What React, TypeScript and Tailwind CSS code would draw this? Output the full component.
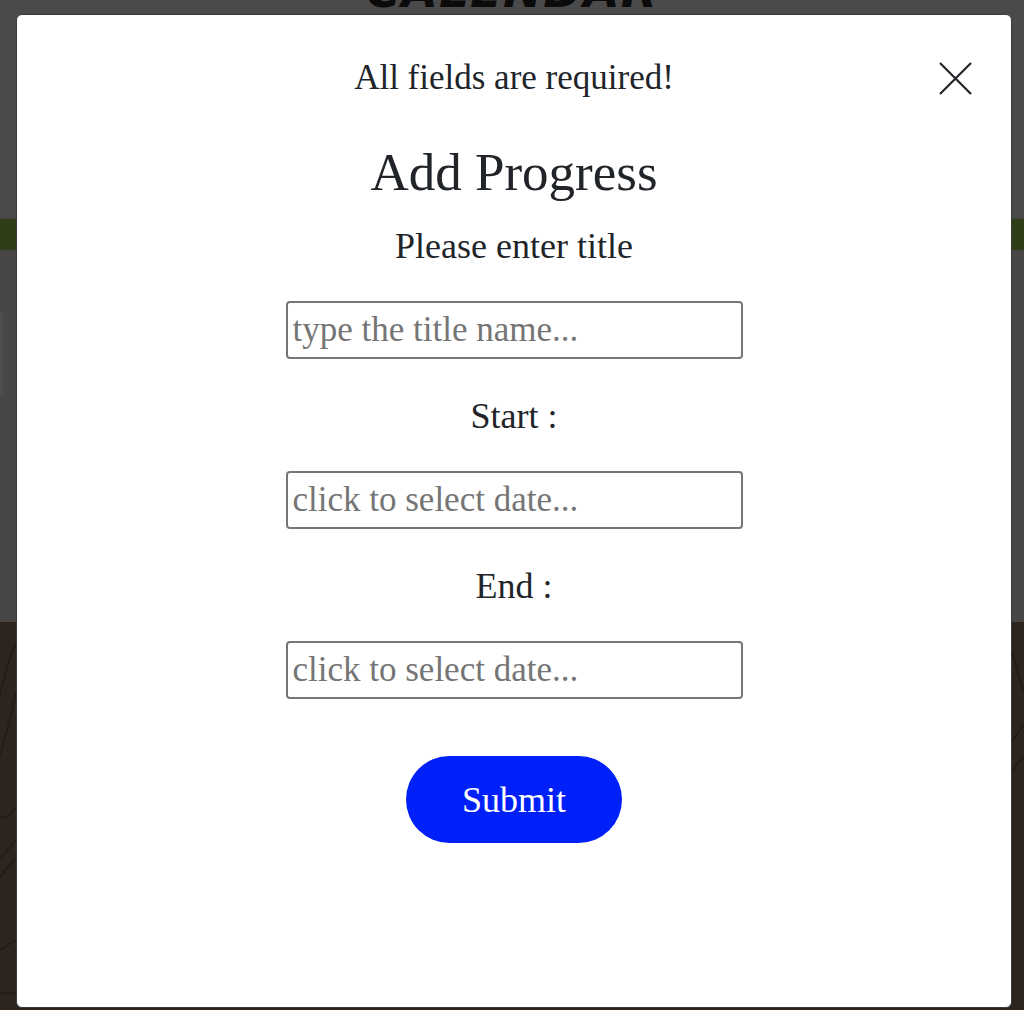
import React, { useState } from 'react';

const serif = { fontFamily: '"Liberation Serif", "DejaVu Serif", serif' };

type Field = {
  label: string;
  placeholder: string;
};

const fields: Field[] = [
  { label: 'Please enter title', placeholder: 'type the title name...' },
  { label: 'Start :', placeholder: 'click to select date...' },
  { label: 'End :', placeholder: 'click to select date...' },
];

const Contours: React.FC = () => (
  <svg className="block h-full w-full" viewBox="0 0 1024 388" preserveAspectRatio="none" fill="none">
    <g stroke="#221a15" strokeWidth="1.5">
      <path d="M16 20 C 8 40, 2 60, -4 90" />
      <path d="M16 70 C 10 100, 4 120, -2 140" />
      <path d="M-4 190 C 4 200, 10 195, 16 185" />
      <path d="M-4 240 C 4 232, 10 226, 16 218" />
      <path d="M-4 260 C 4 250, 10 242, 16 236" />
      <path d="M-4 330 C 4 326, 10 322, 16 318" />
      <path d="M-4 370 C 6 372, 12 372, 16 370" />
      <path d="M1012 30 C 1018 50, 1022 70, 1030 80" />
      <path d="M1012 120 C 1018 110, 1024 100, 1030 96" />
      <path d="M1012 150 C 1018 140, 1024 134, 1030 130" />
    </g>
  </svg>
);

export default function App() {
  const [values, setValues] = useState<string[]>(['', '', '']);

  return (
    <div className="relative h-[1010px] w-[1024px] overflow-hidden bg-[#474747]" style={serif}>
      {/* page underneath the backdrop */}
      <div className="flex h-full flex-col">
        <div className="relative h-[219px] bg-[#4a4a4a]">
          <div
            className="-mt-[33px] text-center text-[47px] font-black italic leading-none tracking-[1px] text-[#0b0b0c]"
            style={{ fontFamily: '"DejaVu Sans", sans-serif' }}
          >
            CALENDAR
          </div>
          <div className="absolute bottom-0 left-0 right-0 h-px bg-[#444]" />
        </div>
        <div className="h-[31px] bg-[#2f3e17]" />
        <div className="flex h-[372px] items-start pt-[62px]">
          <div className="h-[84px] w-[3px] rounded-r-md bg-[#4e4e4e]" />
        </div>
        <div className="flex-1 bg-[#2d241e]">
          <Contours />
        </div>
      </div>

      {/* modal */}
      <div className="absolute left-[16px] top-[14px] flex h-[994px] w-[996px] flex-col items-center rounded-[6px] border border-[#3a3a3a] bg-white text-[#212529]">
        <div className="grid w-full grid-cols-[1fr_auto_1fr] items-center pt-[37px]">
          <div />
          <p className="text-[35px] leading-[52px]">All fields are required!</p>
          <div className="flex justify-end pr-[38px]">
            <button type="button" aria-label="Close" className="flex h-[35px] w-[35px] items-center justify-center">
              <svg width="33" height="33" viewBox="0 0 33 33" fill="none">
                <path d="M1 1 L32 32 M32 1 L1 32" stroke="#212529" strokeWidth="2.2" />
              </svg>
            </button>
          </div>
        </div>

        <h2 className="mt-[38px] text-[53px] leading-[60px]">Add Progress</h2>

        {fields.map((f, i) => (
          <div key={i} className={`flex flex-col items-center ${i === 0 ? 'mt-[18px]' : 'mt-[31px]'}`}>
            <label className="text-[36px] leading-[52px]">{f.label}</label>
            <input
              value={values[i]}
              onChange={(e) => setValues(values.map((v, j) => (j === i ? e.target.value : v)))}
              placeholder={f.placeholder}
              className="mt-[29px] h-[58px] w-[457px] rounded-[4px] border-2 border-[#767676] px-[5px] text-[35px] text-[#212529] outline-none placeholder:text-[#757575]"
              style={serif}
            />
          </div>
        ))}

        <button
          type="button"
          className="mt-[57px] h-[87px] w-[216px] rounded-full bg-[#0020fa] text-[36px] text-white"
          style={serif}
        >
          Submit
        </button>
      </div>
    </div>
  );
}
